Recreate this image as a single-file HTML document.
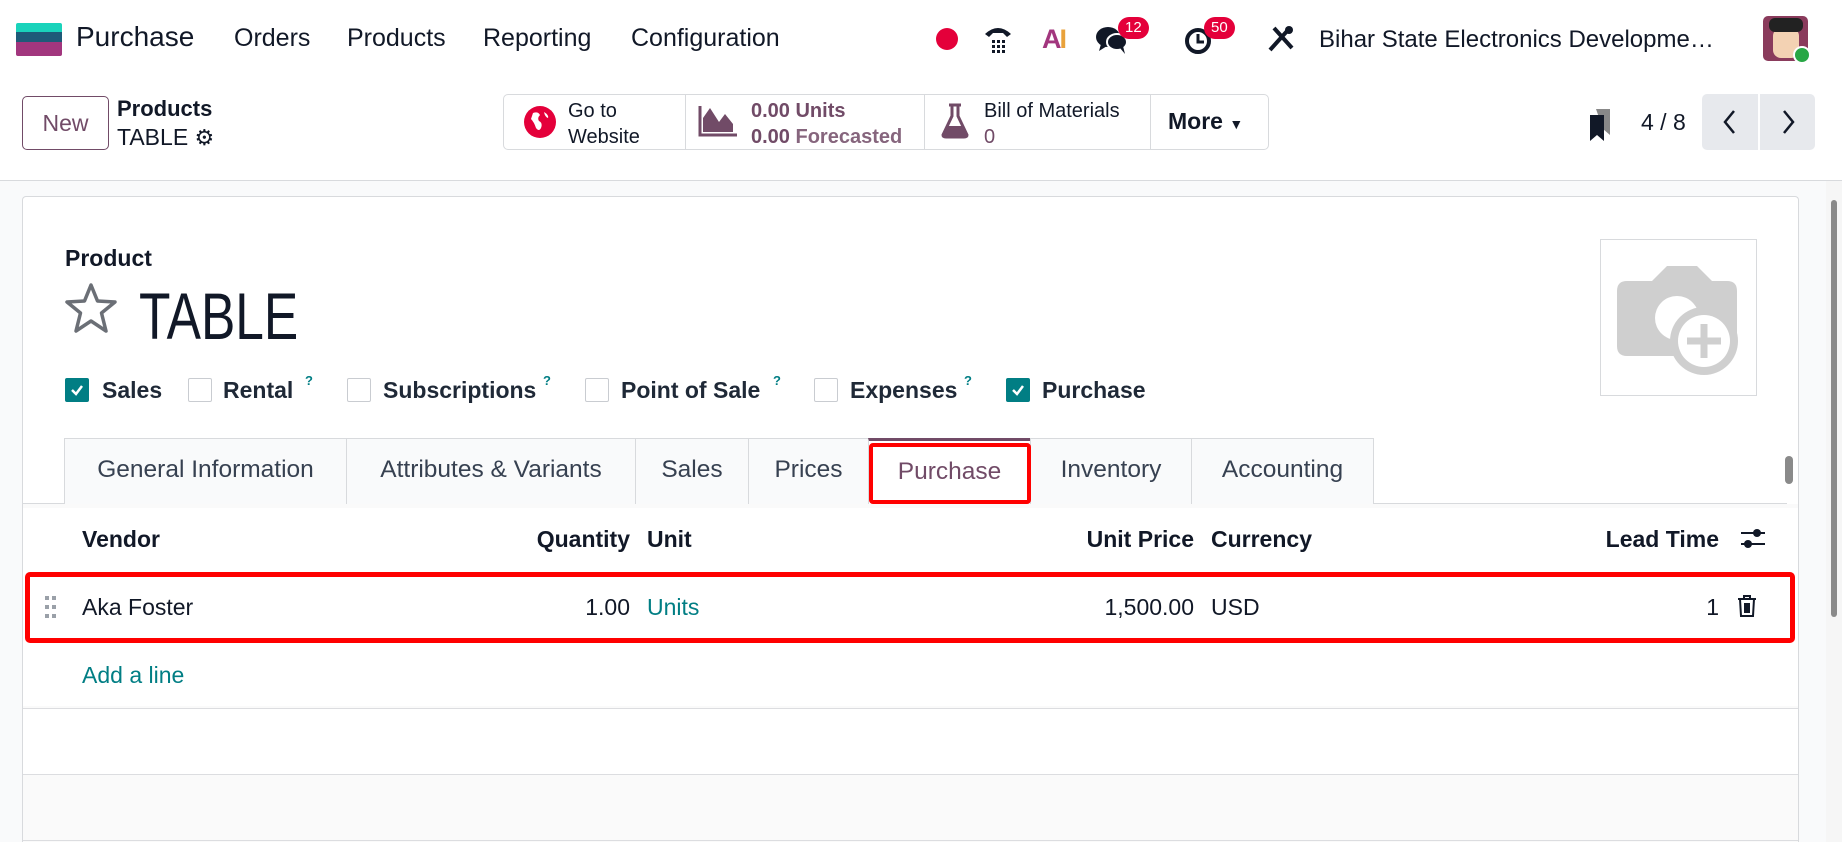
<!DOCTYPE html>
<html style="height:842px;overflow:hidden"><head><meta charset="utf-8"><style>
*{box-sizing:border-box;margin:0;padding:0}
body{width:1842px;height:842px;overflow:hidden;background:#f9fafb;font-family:"Liberation Sans",sans-serif;color:#111827;position:relative}
.a{position:absolute;white-space:nowrap}
.nav{left:0;top:0;width:1842px;height:80px;background:#fff}
.cp{left:0;top:80px;width:1842px;height:101px;background:#fff;border-bottom:1px solid #d8dadd}
.menu{font-size:25px;top:24px;color:#111827}
.badge{background:#e4003a;color:#fff;font-size:15px;border-radius:12px;padding:3px 7px;line-height:16px}
.btnbox{left:503px;top:94px;width:766px;height:56px;border:1px solid #d8dadd;border-radius:5px;background:#fff}
.sheet{left:22px;top:196px;width:1777px;height:646px;background:#fff;border:1px solid #d8dadd;border-bottom:none;border-radius:4px 4px 0 0}
.cb{width:24px;height:24px;border:1px solid #c9ccd1;border-radius:2px;background:#fff}
.cb.on{background:#017e84;border-color:#017e84}
.lbl{font-size:23px;font-weight:bold;color:#1f2937;top:377px}
.q{font-size:13px;color:#017e84;font-weight:bold;top:373px}
.tab{top:438px;height:66px;border:1px solid #d8dadd;border-bottom:none;background:#f9fafb;font-size:24.5px;color:#374151;text-align:center;line-height:62px;margin-left:-1px}
.th{font-size:23px;font-weight:bold;top:526px}
.td{font-size:23px;top:594px}
</style></head><body>
<div class="a nav"></div>
<div class="a" style="left:16px;top:23px;width:46px;height:9px;background:#1ad3bb;border-radius:2px 2px 0 0"></div>
<div class="a" style="left:16px;top:32px;width:46px;height:10px;background:#1e5a78"></div>
<div class="a" style="left:16px;top:42px;width:46px;height:14px;background:#a2367e;border-radius:0 0 2px 2px"></div>
<div class="a" style="left:76px;top:21px;font-size:28px;color:#111827">Purchase</div>
<div class="a menu" style="left:234px">Orders</div>
<div class="a menu" style="left:347px">Products</div>
<div class="a menu" style="left:483px">Reporting</div>
<div class="a menu" style="left:631px">Configuration</div>
<div class="a" style="left:936px;top:28px;width:22px;height:22px;border-radius:50%;background:#e4003a"></div>
<svg class="a" style="left:982px;top:22px" width="32" height="34" viewBox="0 0 32 34"><path d="M3 12 Q16 0 29 12 L25 15 L21 11 L11 11 L7 15 Z" fill="#111827"/><g fill="#111827"><rect x="10" y="18" width="3" height="3"/><rect x="15" y="18" width="3" height="3"/><rect x="20" y="18" width="3" height="3"/><rect x="10" y="23" width="3" height="3"/><rect x="15" y="23" width="3" height="3"/><rect x="20" y="23" width="3" height="3"/><rect x="10" y="28" width="3" height="3"/><rect x="15" y="28" width="3" height="3"/><rect x="20" y="28" width="3" height="3"/></g></svg>
<div class="a" style="left:1042px;top:24px;font-size:27px;font-weight:bold;color:#e9a23b;letter-spacing:-2px"><span style="color:#a2367e">A</span>I</div>
<svg class="a" style="left:1095px;top:24px" width="34" height="32" viewBox="0 0 34 32"><ellipse cx="13" cy="13" rx="12" ry="10" fill="#111827"/><path d="M6 20 L4 27 L12 22Z" fill="#111827"/><ellipse cx="22" cy="18" rx="10" ry="8" fill="#111827" stroke="#fff" stroke-width="2"/><path d="M25 24 L30 30 L28 22Z" fill="#111827"/></svg>
<div class="a badge" style="left:1118px;top:17px">12</div>
<svg class="a" style="left:1183px;top:24px" width="32" height="32" viewBox="0 0 32 32"><circle cx="15" cy="17" r="11" fill="none" stroke="#111827" stroke-width="4"/><path d="M15 10 V18 H21" stroke="#111827" stroke-width="3" fill="none"/></svg>
<div class="a badge" style="left:1204px;top:17px">50</div>
<svg class="a" style="left:1266px;top:24px" width="30" height="30" viewBox="0 0 30 30"><path d="M4 26 L22 6 M8 4 L26 24" stroke="#111827" stroke-width="4"/><circle cx="23" cy="6" r="4" fill="#111827"/></svg>
<div class="a" style="left:1319px;top:26px;font-size:24px;color:#111827;width:408px;overflow:hidden;text-overflow:ellipsis">Bihar State Electronics Development Corporation</div>
<div class="a" style="left:1763px;top:16px;width:45px;height:45px;border-radius:5px;background:#8a3b5c;overflow:hidden"><div style="position:absolute;left:10px;top:12px;width:26px;height:30px;background:#f3d2b3;border-radius:8px"></div><div style="position:absolute;left:6px;top:2px;width:34px;height:14px;background:#222;border-radius:6px"></div></div>
<div class="a" style="left:1793px;top:46px;width:18px;height:18px;border-radius:50%;background:#28a745;border:2px solid #fff"></div>

<div class="a cp"></div>
<div class="a" style="left:22px;top:96px;width:87px;height:54px;border:1px solid #714b67;border-radius:5px;color:#714b67;font-size:23px;text-align:center;line-height:52px">New</div>
<div class="a" style="left:117px;top:96px;font-size:22px;font-weight:bold;color:#111827">Products</div>
<div class="a" style="left:117px;top:124px;font-size:23px;color:#111827">TABLE <span style="font-size:22px">&#9881;</span></div>
<div class="a btnbox"></div>
<div class="a" style="left:685px;top:95px;width:1px;height:54px;background:#d8dadd"></div>
<div class="a" style="left:924px;top:95px;width:1px;height:54px;background:#d8dadd"></div>
<div class="a" style="left:1150px;top:95px;width:1px;height:54px;background:#d8dadd"></div>
<svg class="a" style="left:524px;top:106px" width="32" height="32" viewBox="0 0 32 32"><circle cx="16" cy="16" r="16" fill="#e4003a"/><path d="M9 7 Q14 5 16 9 Q13 12 15 15 Q19 17 17 22 Q15 26 12 22 Q10 16 7 13Z M20 6 Q25 9 24 12 Q21 11 20 6Z" fill="#fff"/></svg>
<div class="a" style="left:568px;top:98px;font-size:20px;line-height:26px;color:#111827">Go to<br>Website</div>
<svg class="a" style="left:697px;top:104px" width="42" height="34" viewBox="0 0 42 34"><path d="M3 2 V31 H40" stroke="#714b67" stroke-width="3" fill="none"/><path d="M6 28 V14 L13 4 L22 18 L28 10 L36 20 V28Z" fill="#714b67"/></svg>
<div class="a" style="left:751px;top:98px;font-size:20px;line-height:26px;font-weight:bold;color:#714b67">0.00 Units<br>0.00 <span style="opacity:.85">Forecasted</span></div>
<svg class="a" style="left:941px;top:103px" width="28" height="36" viewBox="0 0 28 36"><path d="M8 2 H20 M11 2 V13 L2 32 Q2 34 5 34 H23 Q26 34 26 32 L17 13 V2" stroke="#714b67" stroke-width="3" fill="none"/><path d="M6 23 H22 L26 33 H2Z" fill="#714b67"/></svg>
<div class="a" style="left:984px;top:98px;font-size:20px;line-height:26px;color:#111827">Bill of Materials<br><span style="color:#714b67">0</span></div>
<div class="a" style="left:1168px;top:108px;font-size:23px;font-weight:bold;color:#111827">More <span style="font-size:14px">&#9660;</span></div>
<svg class="a" style="left:1588px;top:107px" width="26" height="34" viewBox="0 0 26 34"><path d="M8 2 H22 V28 L15 22Z" fill="#888"/><path d="M2 8 H16 V34 L9 28 L2 34Z" fill="#111827"/></svg>
<div class="a" style="left:1641px;top:109px;font-size:23px;color:#111827">4 / 8</div>
<div class="a" style="left:1702px;top:94px;width:56px;height:56px;background:#e7e9ed;border-radius:5px 0 0 5px"></div>
<div class="a" style="left:1760px;top:94px;width:55px;height:56px;background:#e7e9ed;border-radius:0 5px 5px 0"></div>
<svg class="a" style="left:1720px;top:108px" width="20" height="28" viewBox="0 0 20 28"><path d="M14 3 L5 14 L14 25" stroke="#111827" stroke-width="2.5" fill="none"/></svg>
<svg class="a" style="left:1778px;top:108px" width="20" height="28" viewBox="0 0 20 28"><path d="M6 3 L15 14 L6 25" stroke="#111827" stroke-width="2.5" fill="none"/></svg>

<div class="a sheet"></div>
<div class="a" style="left:65px;top:245px;font-size:23px;font-weight:bold;color:#111827">Product</div>
<svg class="a" style="left:64px;top:282px" width="54" height="52" viewBox="0 0 54 52"><path d="M27 3 L33.5 19 L51 20 L37.5 31 L42 49 L27 39 L12 49 L16.5 31 L3 20 L20.5 19Z" fill="none" stroke="#6b6f76" stroke-width="3.5" stroke-linejoin="round"/></svg>
<div class="a" style="left:139px;top:276px;font-size:66px;line-height:80px;color:#111827;transform:scaleX(.78);transform-origin:left center">TABLE</div>
<div class="a" style="left:1600px;top:239px;width:157px;height:157px;border:1px solid #d8dadd;background:#fff"></div>
<svg class="a" style="left:1617px;top:266px" width="124" height="110" viewBox="0 0 124 110"><path d="M10 15 H35 L50 0 H80 L95 15 H110 Q120 15 120 25 V80 Q120 90 110 90 H10 Q0 90 0 80 V25 Q0 15 10 15Z" fill="#cfcfcf"/><circle cx="60" cy="52" r="22" fill="#fff"/><circle cx="87" cy="75" r="34" fill="#cfcfcf"/><circle cx="87" cy="75" r="26" fill="#fff"/><path d="M87 58 V92 M70 75 H104" stroke="#cfcfcf" stroke-width="7"/></svg>

<div class="a cb on" style="left:65px;top:378px"><svg width="22" height="22" viewBox="0 0 22 22"><path d="M6 11 L10 15 L16 7" stroke="#fff" stroke-width="2.5" fill="none"/></svg></div>
<div class="a lbl" style="left:102px">Sales</div>
<div class="a cb" style="left:188px;top:378px"></div>
<div class="a lbl" style="left:223px">Rental</div><div class="a q" style="left:305px">?</div>
<div class="a cb" style="left:347px;top:378px"></div>
<div class="a lbl" style="left:383px">Subscriptions</div><div class="a q" style="left:543px">?</div>
<div class="a cb" style="left:585px;top:378px"></div>
<div class="a lbl" style="left:621px">Point of Sale</div><div class="a q" style="left:773px">?</div>
<div class="a cb" style="left:814px;top:378px"></div>
<div class="a lbl" style="left:850px">Expenses</div><div class="a q" style="left:964px">?</div>
<div class="a cb on" style="left:1006px;top:378px"><svg width="22" height="22" viewBox="0 0 22 22"><path d="M6 11 L10 15 L16 7" stroke="#fff" stroke-width="2.5" fill="none"/></svg></div>
<div class="a lbl" style="left:1042px">Purchase</div>

<div class="a" style="left:23px;top:503px;width:1764px;height:1px;background:#d8dadd"></div>
<div class="a tab" style="left:65px;width:283px">General Information</div>
<div class="a tab" style="left:347px;width:290px">Attributes &amp; Variants</div>
<div class="a tab" style="left:636px;width:114px">Sales</div>
<div class="a tab" style="left:749px;width:121px">Prices</div>
<div class="a tab" style="left:869px;width:163px;background:#fff;height:67px;border-top:3px solid #714b67;color:#714b67">Purchase</div>
<div class="a tab" style="left:1031px;width:162px">Inventory</div>
<div class="a tab" style="left:1192px;width:183px">Accounting</div>
<div class="a" style="left:869px;top:443px;width:162px;height:61px;border:4px solid #f00;border-radius:4px"></div>
<div class="a" style="left:1785px;top:456px;width:8px;height:28px;background:#8a8a8a;border-radius:4px"></div>

<div class="a" style="left:23px;top:504px;width:1775px;height:338px;background:#fafafa"></div>
<div class="a" style="left:23px;top:508px;width:1775px;height:198px;background:#fff"></div>
<div class="a" style="left:23px;top:708px;width:1775px;height:1px;background:#dcdde0"></div>
<div class="a" style="left:23px;top:709px;width:1775px;height:65px;background:#fff"></div>
<div class="a" style="left:23px;top:774px;width:1775px;height:1px;background:#dcdde0"></div>
<div class="a" style="left:23px;top:840px;width:1775px;height:1px;background:#dcdde0"></div>
<div class="a" style="left:22px;top:504px;width:1px;height:338px;background:#d8dadd"></div>
<div class="a" style="left:1798px;top:504px;width:1px;height:338px;background:#d8dadd"></div>
<div class="a th" style="left:82px">Vendor</div>
<div class="a th" style="right:1212px">Quantity</div>
<div class="a th" style="left:647px">Unit</div>
<div class="a th" style="right:648px">Unit Price</div>
<div class="a th" style="left:1211px">Currency</div>
<div class="a th" style="right:123px">Lead Time</div>
<svg class="a" style="left:1740px;top:526px" width="26" height="26" viewBox="0 0 26 26"><path d="M1 7 H25 M1 18 H25" stroke="#111827" stroke-width="2"/><circle cx="17" cy="7" r="4" fill="#111827"/><circle cx="8" cy="18" r="4" fill="#111827"/></svg>
<div class="a" style="left:25px;top:572px;width:1770px;height:71px;border:5px solid #f00;border-radius:5px;background:#fff"></div>
<svg class="a" style="left:44px;top:595px" width="14" height="24" viewBox="0 0 14 24"><g fill="#9aa0a8"><rect x="1" y="1" width="4" height="4"/><rect x="8" y="1" width="4" height="4"/><rect x="1" y="10" width="4" height="4"/><rect x="8" y="10" width="4" height="4"/><rect x="1" y="19" width="4" height="4"/><rect x="8" y="19" width="4" height="4"/></g></svg>
<div class="a td" style="left:82px">Aka Foster</div>
<div class="a td" style="right:1212px">1.00</div>
<div class="a td" style="left:647px;color:#017e84">Units</div>
<div class="a td" style="right:648px">1,500.00</div>
<div class="a td" style="left:1211px">USD</div>
<div class="a td" style="right:123px">1</div>
<svg class="a" style="left:1737px;top:594px" width="20" height="24" viewBox="0 0 20 24"><path d="M1 5 H19 M7 5 V2 H13 V5 M3 5 L4 22 H16 L17 5 M8 9 V19 M10 9 V19 M12 9 V19" stroke="#111827" stroke-width="2" fill="none"/></svg>
<div class="a" style="left:82px;top:662px;font-size:23px;color:#017e84">Add a line</div>

<div class="a" style="left:1826px;top:181px;width:16px;height:661px;background:#f6f6f6"></div>
<div class="a" style="left:1831px;top:200px;width:6px;height:417px;background:#8a8a8a;border-radius:3px"></div>
</body></html>
